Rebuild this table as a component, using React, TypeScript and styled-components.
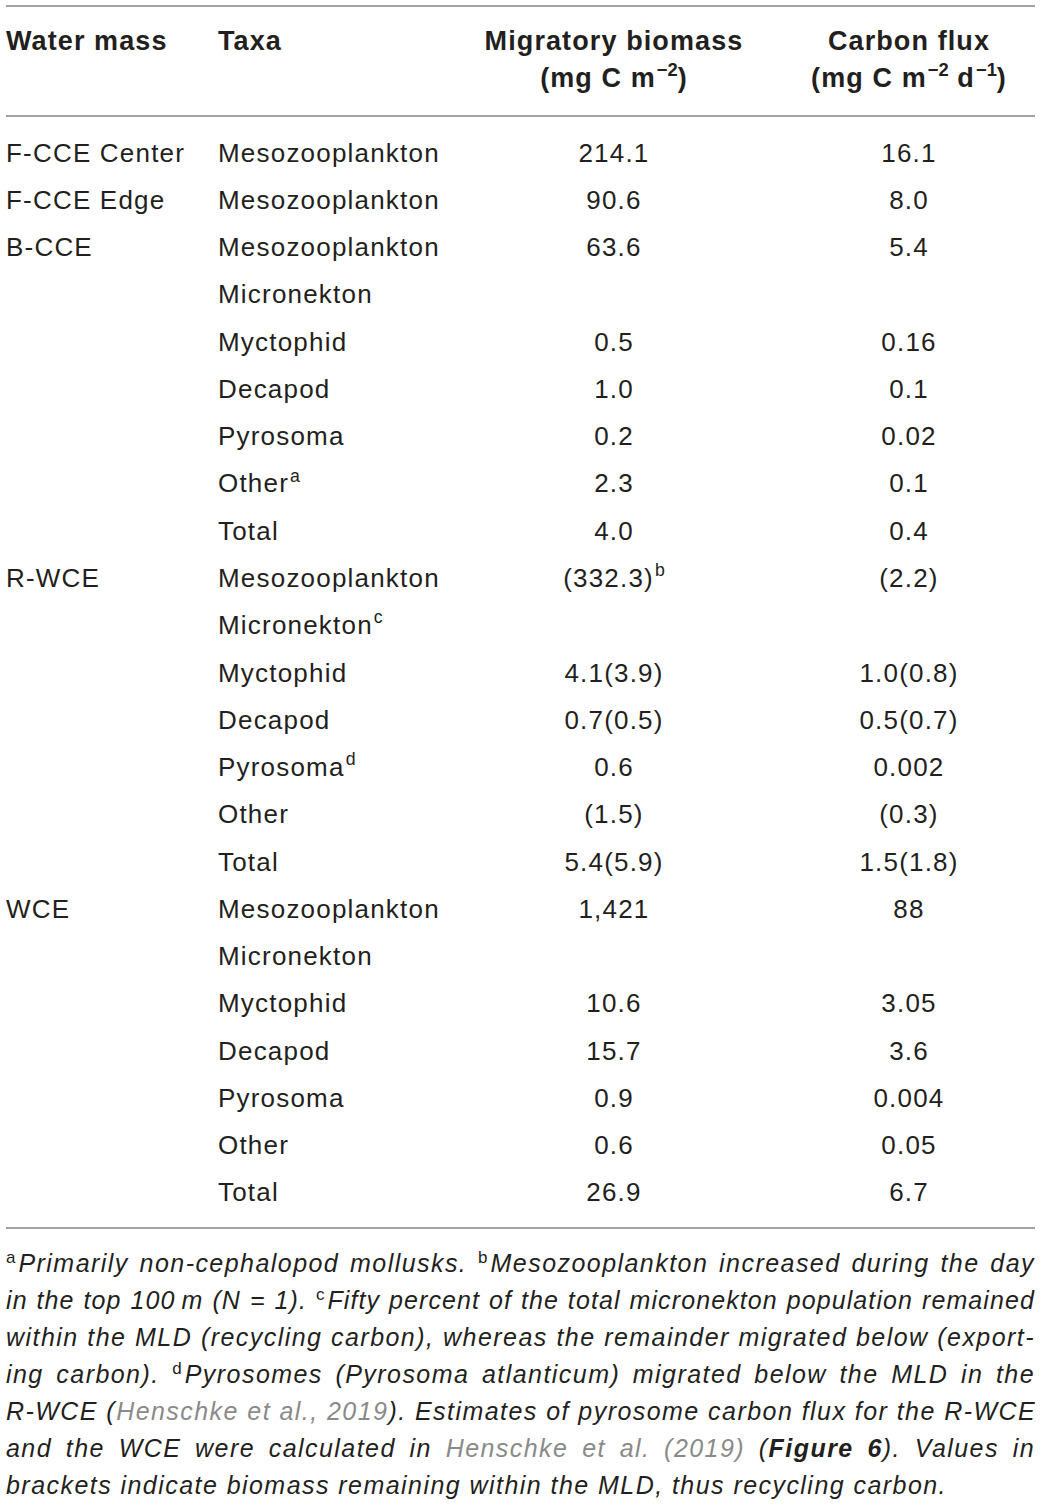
import styled, { createGlobalStyle } from "styled-components";

const GlobalStyle = createGlobalStyle`
	html, body {
		margin: 0;
		padding: 0;
		background: #ffffff;
	}
	body {
		font-family: "Liberation Sans", Arial, sans-serif;
		color: #231f20;
	}
`;

type Row = {
	mass?: string,
	taxa: string,
	taxaNote?: string,
	biomass?: string,
	biomassNote?: string,
	flux?: string,
};

const rows: Array<Row> = [
	{ mass: 'F-CCE Center', taxa: 'Mesozooplankton', biomass: '214.1', flux: '16.1' },
	{ mass: 'F-CCE Edge', taxa: 'Mesozooplankton', biomass: '90.6', flux: '8.0' },
	{ mass: 'B-CCE', taxa: 'Mesozooplankton', biomass: '63.6', flux: '5.4' },
	{ taxa: 'Micronekton' },
	{ taxa: 'Myctophid', biomass: '0.5', flux: '0.16' },
	{ taxa: 'Decapod', biomass: '1.0', flux: '0.1' },
	{ taxa: 'Pyrosoma', biomass: '0.2', flux: '0.02' },
	{ taxa: 'Other', taxaNote: 'a', biomass: '2.3', flux: '0.1' },
	{ taxa: 'Total', biomass: '4.0', flux: '0.4' },
	{ mass: 'R-WCE', taxa: 'Mesozooplankton', biomass: '(332.3)', biomassNote: 'b', flux: '(2.2)' },
	{ taxa: 'Micronekton', taxaNote: 'c' },
	{ taxa: 'Myctophid', biomass: '4.1(3.9)', flux: '1.0(0.8)' },
	{ taxa: 'Decapod', biomass: '0.7(0.5)', flux: '0.5(0.7)' },
	{ taxa: 'Pyrosoma', taxaNote: 'd', biomass: '0.6', flux: '0.002' },
	{ taxa: 'Other', biomass: '(1.5)', flux: '(0.3)' },
	{ taxa: 'Total', biomass: '5.4(5.9)', flux: '1.5(1.8)' },
	{ mass: 'WCE', taxa: 'Mesozooplankton', biomass: '1,421', flux: '88' },
	{ taxa: 'Micronekton' },
	{ taxa: 'Myctophid', biomass: '10.6', flux: '3.05' },
	{ taxa: 'Decapod', biomass: '15.7', flux: '3.6' },
	{ taxa: 'Pyrosoma', biomass: '0.9', flux: '0.004' },
	{ taxa: 'Other', biomass: '0.6', flux: '0.05' },
	{ taxa: 'Total', biomass: '26.9', flux: '6.7' },
];

export default function App() {
	return (
		<Page>
			<GlobalStyle />
			<Rule />
			<HeadGrid>
				<HeadCell>Water mass</HeadCell>
				<HeadCell>Taxa</HeadCell>
				<HeadCell $center>
					Migratory biomass<br />
					(mg C m<Sup>−2</Sup>)
				</HeadCell>
				<HeadCell $center>
					Carbon flux<br />
					(mg C m<Sup>−2</Sup> d<Sup>−1</Sup>)
				</HeadCell>
			</HeadGrid>
			<Rule />
			<Body>
				{rows.map((r, i) => (
					<BodyRow key={i}>
						<Cell>{r.mass ?? ''}</Cell>
						<Cell>
							{r.taxa}
							{r.taxaNote && <Sup>{r.taxaNote}</Sup>}
						</Cell>
						<Cell $center>
							{r.biomass ?? ''}
							{r.biomassNote && <Sup>{r.biomassNote}</Sup>}
						</Cell>
						<Cell $center>{r.flux ?? ''}</Cell>
					</BodyRow>
				))}
			</Body>
			<Rule />
			<Notes>
				<NoteLine><NoteMark>a</NoteMark>Primarily non-cephalopod mollusks. <NoteMark>b</NoteMark>Mesozooplankton increased during the day</NoteLine>
				<NoteLine $tight>in the top 100{'\u2009'}m (N = 1). <NoteMark>c</NoteMark>Fifty percent of the total micronekton population remained</NoteLine>
				<NoteLine>within the MLD (recycling carbon), whereas the remainder migrated below (export-</NoteLine>
				<NoteLine>ing carbon). <NoteMark>d</NoteMark>Pyrosomes (Pyrosoma atlanticum) migrated below the MLD in the</NoteLine>
				<NoteLine>R-WCE (<Cite>Henschke et al., 2019</Cite>). Estimates of pyrosome carbon flux for the R-WCE</NoteLine>
				<NoteLine>and the WCE were calculated in <Cite>Henschke et al. (2019)</Cite> (<b>Figure 6</b>). Values in</NoteLine>
				<NoteLine $last>brackets indicate biomass remaining within the MLD, thus recycling carbon.</NoteLine>
			</Notes>
		</Page>
	);
}

const Page = styled.div`
	width: 1029px;
	padding: 5px 7px 0 6px;
	font-family: "Liberation Sans", Arial, sans-serif;
	color: #231f20;
`

const Rule = styled.hr`
	margin: 0;
	border: none;
	height: 2px;
	background-color: #a3a3a3;
`

const columns = '212px 227px 338px 252px';

const HeadGrid = styled.div`
	display: grid;
	grid-template-columns: ${columns};
	padding: 16px 0 18px;
`

const HeadCell = styled.div<{ $center?: boolean }>`
	font-size: 27px;
	font-weight: bold;
	letter-spacing: 1.1px;
	line-height: 37px;
	text-align: ${p => p.$center ? 'center' : 'left'};
	white-space: nowrap;
`

const Body = styled.div`
	padding: 12px 0 11px;
`

const BodyRow = styled.div`
	display: grid;
	grid-template-columns: ${columns};
	height: 47.27px;
	align-items: center;
`

const Cell = styled.div<{ $center?: boolean }>`
	font-size: 26px;
	letter-spacing: 1.2px;
	line-height: 30px;
	text-align: ${p => p.$center ? 'center' : 'left'};
	white-space: nowrap;
`

const Sup = styled.sup`
	font-size: 68%;
	line-height: 0;
	vertical-align: 0.62em;
	letter-spacing: 0;
	margin-left: 1px;
`

const Notes = styled.div`
	padding-top: 16px;
	font-size: 25px;
	font-style: italic;
	line-height: 37px;
	letter-spacing: 1.45px;
`

const NoteLine = styled.div<{ $last?: boolean, $tight?: boolean }>`
	text-align: ${p => p.$last ? 'left' : 'justify'};
	text-align-last: ${p => p.$last ? 'left' : 'justify'};
	letter-spacing: ${p => p.$tight ? '1.1px' : 'inherit'};
	white-space: nowrap;
	b {
		font-weight: bold;
	}
`

const NoteMark = styled.sup`
	font-size: 68%;
	font-style: normal;
	line-height: 0;
	vertical-align: 0.55em;
	margin-right: 3px;
	letter-spacing: 0;
`

const Cite = styled.span`
	color: #8a8a8a;
`
